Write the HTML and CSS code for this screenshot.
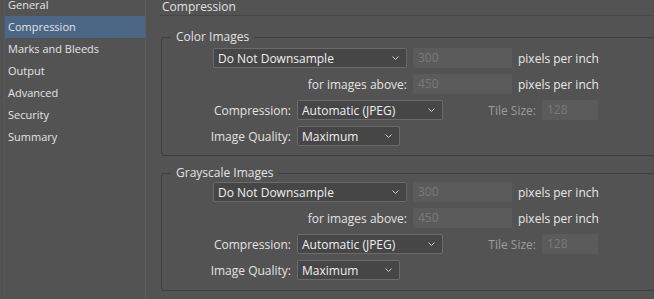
FILE: index.html
```html
<!DOCTYPE html>
<html>
<head>
    <title>PDF Export - Compression</title>
    <meta name="viewport" content="width=device-width, initial-scale=1.0">
    <link rel="stylesheet" href="styles.css">
</head>
<body>
    <div class="window">
        <nav class="sidebar">
            <ul class="nav-list">
                <li>General</li>
                <li class="active">Compression</li>
                <li>Marks and Bleeds</li>
                <li>Output</li>
                <li>Advanced</li>
                <li>Security</li>
                <li>Summary</li>
            </ul>
        </nav>

        <main class="panel">
            <h1 class="panel-title">Compression</h1>

            <fieldset class="group">
                <legend>Color Images</legend>
                <div class="row row-sample">
                    <div class="select select-sample">Do Not Downsample<svg class="chevron" width="7" height="4" viewBox="0 0 7 4"><polyline points="0.5,0.5 3.5,3.5 6.5,0.5"/></svg></div>
                    <div class="field field-ppi">300</div>
                    <span class="unit">pixels per inch</span>
                </div>
                <div class="row">
                    <span class="label label-wide">for images above:</span>
                    <div class="field field-ppi">450</div>
                    <span class="unit">pixels per inch</span>
                </div>
                <div class="row">
                    <span class="label">Compression:</span>
                    <div class="select select-comp">Automatic (JPEG)<svg class="chevron" width="7" height="4" viewBox="0 0 7 4"><polyline points="0.5,0.5 3.5,3.5 6.5,0.5"/></svg></div>
                    <span class="label label-tile">Tile Size:</span>
                    <div class="field field-tile">128</div>
                </div>
                <div class="row">
                    <span class="label">Image Quality:</span>
                    <div class="select select-quality">Maximum<svg class="chevron" width="7" height="4" viewBox="0 0 7 4"><polyline points="0.5,0.5 3.5,3.5 6.5,0.5"/></svg></div>
                </div>
            </fieldset>

            <fieldset class="group">
                <legend>Grayscale Images</legend>
                <div class="row row-sample">
                    <div class="select select-sample">Do Not Downsample<svg class="chevron" width="7" height="4" viewBox="0 0 7 4"><polyline points="0.5,0.5 3.5,3.5 6.5,0.5"/></svg></div>
                    <div class="field field-ppi">300</div>
                    <span class="unit">pixels per inch</span>
                </div>
                <div class="row">
                    <span class="label label-wide">for images above:</span>
                    <div class="field field-ppi">450</div>
                    <span class="unit">pixels per inch</span>
                </div>
                <div class="row">
                    <span class="label">Compression:</span>
                    <div class="select select-comp">Automatic (JPEG)<svg class="chevron" width="7" height="4" viewBox="0 0 7 4"><polyline points="0.5,0.5 3.5,3.5 6.5,0.5"/></svg></div>
                    <span class="label label-tile">Tile Size:</span>
                    <div class="field field-tile">128</div>
                </div>
                <div class="row">
                    <span class="label">Image Quality:</span>
                    <div class="select select-quality">Maximum<svg class="chevron" width="7" height="4" viewBox="0 0 7 4"><polyline points="0.5,0.5 3.5,3.5 6.5,0.5"/></svg></div>
                </div>
            </fieldset>
        </main>
    </div>
</body>
</html>
```

FILE: styles.css
```css
/* Base */
* {
    box-sizing: border-box;
}

body {
    margin: 0;
    background-color: #535353;
    color: #e2e2e2;
    font-family: 'Open Sans', 'Noto Sans', sans-serif;
    font-size: 12px;
}

.window {
    display: flex;
    height: 299px;
    overflow: hidden;
}

/* Left page list */
.sidebar {
    flex: none;
    width: 142px;
    margin-left: 4px;
    border-left: 1px solid #585858;
    border-right: 1px solid #5f5f5f;
}

.nav-list {
    list-style: none;
    margin: -6px 0 0;
    padding: 0;
}

.nav-list li {
    height: 22px;
    line-height: 22px;
    padding-left: 3px;
    font-size: 11px;
    color: #e4e4e4;
}

.nav-list li.active {
    background-color: #4b6785;
}

/* Right settings panel */
.panel {
    flex: 1;
    min-width: 0;
    overflow: hidden;
    padding-left: 14px;
}

.panel-title {
    margin: 0;
    height: 16px;
    padding-left: 2px;
    line-height: 13px;
    font-size: 12px;
    font-weight: normal;
    border-bottom: 1px solid #474747;
}

.group {
    margin: 13px -40px 0 1px;
    padding: 3px 0 9px;
    border: 1px solid #3e3e3e;
    border-radius: 3px;
    min-width: 0;
}

.group + .group {
    margin-top: 9px;
    padding-top: 1px;
    padding-bottom: 10px;
}

.group legend {
    margin-left: 9px;
    padding: 0 5px;
    line-height: 16px;
}

.row {
    display: flex;
    align-items: center;
    gap: 6px;
    height: 20px;
    margin-bottom: 6px;
}

.row:last-child {
    margin-bottom: 0;
}

.row-sample {
    padding-left: 51px;
}

.label {
    flex: none;
    width: 129px;
    text-align: right;
}

.label-wide {
    width: 245px;
}

.label-tile {
    width: 87px;
    color: #9c9c9c;
}

/* Dropdowns */
.select {
    flex: none;
    display: flex;
    align-items: center;
    height: 20px;
    padding: 0 0 0 4px;
    background-color: #464646;
    border: 1px solid #6b6b6b;
    border-radius: 2px;
    color: #efefef;
    white-space: nowrap;
}

.select-sample { width: 194px; }
.select-comp { width: 146px; }
.select-quality { width: 103px; }

.chevron {
    margin-left: auto;
    margin-right: 7px;
    fill: none;
    stroke: #cfcfcf;
    stroke-width: 1;
}

/* Disabled number fields */
.field {
    flex: none;
    height: 20px;
    line-height: 20px;
    padding-left: 5px;
    background-color: #5b5b5b;
    border-radius: 2px;
    color: #7a7a7a;
}

.field-ppi { width: 99px; }
.field-tile { width: 56px; }

.unit {
    color: #e8e8e8;
}
```
